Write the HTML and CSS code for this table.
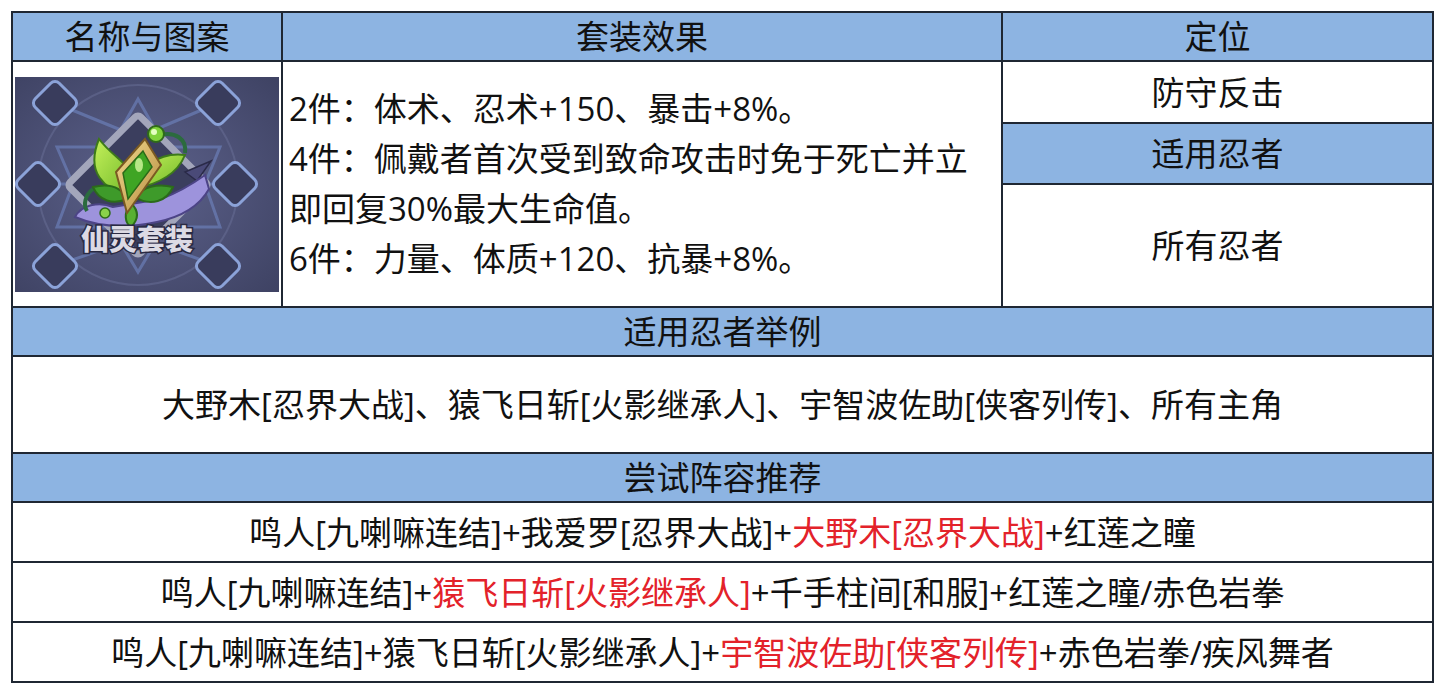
FILE: index.html
```html
<!DOCTYPE html>
<html lang="zh-CN">
<head>
<meta charset="utf-8">
<title>仙灵套装</title>
<link rel="stylesheet" href="styles.css">
</head>
<body>
<div class="sheet">
  <div class="cell head">名称与图案</div>
  <div class="cell head">套装效果</div>
  <div class="cell head">定位</div>

  <div class="cell pic">
    <svg class="emblem" viewBox="0 0 264 215" width="264" height="215">
      <defs>
        <radialGradient id="bg" cx="48%" cy="50%" r="70%">
          <stop offset="0" stop-color="#5d628c"/>
          <stop offset="1" stop-color="#3f4364"/>
        </radialGradient>
        <linearGradient id="leafG" x1="0" y1="0" x2="1" y2="1">
          <stop offset="0" stop-color="#c4f05a"/>
          <stop offset="1" stop-color="#6fb828"/>
        </linearGradient>
        <linearGradient id="gold" x1="0" y1="0" x2="1" y2="1">
          <stop offset="0" stop-color="#f3dc92"/>
          <stop offset="1" stop-color="#b48a3c"/>
        </linearGradient>
      </defs>
      <rect width="264" height="215" fill="url(#bg)"/>
      <circle cx="123" cy="108" r="100" fill="none" stroke="#6a6f98" stroke-width="2" opacity=".5"/>
      <path d="M40 26 L123 60 L203 26 M23 107 L60 107 M220 107 L186 107 M40 189 L123 160 L203 189" fill="none" stroke="#6b7fb8" stroke-width="3" opacity=".7"/>
      <path d="M123 22 L150 70 L205 70 L190 107 L205 150 L150 150 L123 195 L96 150 L42 150 L58 107 L42 70 L96 70 Z" fill="none" stroke="#6f86c2" stroke-width="3" opacity=".6"/>
      <g fill="#393c5c" stroke="#8ba2d8" stroke-width="3">
        <rect x="-17" y="-17" width="34" height="34" rx="6" transform="translate(40 26) rotate(45)"/>
        <rect x="-17" y="-17" width="34" height="34" rx="6" transform="translate(203 26) rotate(45)"/>
        <rect x="-17" y="-17" width="34" height="34" rx="6" transform="translate(23 107) rotate(45)"/>
        <rect x="-17" y="-17" width="34" height="34" rx="6" transform="translate(220 107) rotate(45)"/>
        <rect x="-17" y="-17" width="34" height="34" rx="6" transform="translate(40 189) rotate(45)"/>
        <rect x="-17" y="-17" width="34" height="34" rx="6" transform="translate(203 189) rotate(45)"/>
      </g>
      <rect x="-50" y="-50" width="100" height="100" rx="4" transform="translate(123 108) rotate(45)" fill="#3b3e5e" stroke="#a3a6bb" stroke-width="7"/>
      <path d="M170 95 L196 84 L182 104 Z" fill="#4a4a78" stroke="#2a2a48" stroke-width="1.5"/>
      <path d="M60 140 C66 128 84 124 98 130 L146 122 C162 116 176 108 190 98 L194 112 C184 130 166 140 142 145 C118 150 88 152 60 140 Z" fill="#9d93dc" stroke="#4c4486" stroke-width="2"/>
      <path d="M78 112 C70 118 68 128 72 134" fill="none" stroke="#2b6b3e" stroke-width="4"/>
      <path d="M145 58 C160 54 172 62 170 76" fill="none" stroke="#2b6b3e" stroke-width="4"/>
      <path d="M112 118 C90 112 70 96 84 62 C96 78 110 84 120 100 Z" fill="url(#leafG)" stroke="#3d7a1a" stroke-width="2"/>
      <path d="M118 112 C140 108 162 98 170 78 C156 76 140 80 130 92 Z" fill="url(#leafG)" stroke="#3d7a1a" stroke-width="2"/>
      <path d="M112 122 C98 128 84 124 78 110 C94 106 106 110 112 122 Z" fill="#3e9a2a" stroke="#2b6b1a" stroke-width="2"/>
      <path d="M120 120 C136 130 152 124 158 110 C142 106 128 110 120 120 Z" fill="#3e9a2a" stroke="#2b6b1a" stroke-width="2"/>
      <path d="M116 126 C108 136 110 146 116 150 C124 142 124 134 116 126 Z" fill="#58b032" stroke="#2b6b1a" stroke-width="2"/>
      <polygon points="130,62 146,88 112,136 101,95" fill="url(#gold)" stroke="#7a5a22" stroke-width="2"/>
      <polygon points="128,74 137,90 113,122 108,96" fill="#3fa524" stroke="#2a6a18" stroke-width="1.5"/>
      <ellipse cx="124" cy="88" rx="4" ry="7" fill="#d4f7a0" opacity=".8"/>
      <circle cx="141" cy="57" r="8" fill="#7fd23a" stroke="#2f6a1a" stroke-width="2"/>
      <circle cx="139" cy="55" r="3" fill="#e4ffc0"/>
      <circle cx="90" cy="136" r="5" fill="#8ad24a" stroke="#2f6a1a" stroke-width="1.5"/>
      <text class="emblem-name" x="122" y="173" text-anchor="middle">仙灵套装</text>
    </svg>
  </div>
  <div class="cell effects">
    <div class="line">2件：体术、忍术+150、暴击+8%。</div>
    <div class="line">4件：佩戴者首次受到致命攻击时免于死亡并立</div>
    <div class="line">即回复30%最大生命值。</div>
    <div class="line">6件：力量、体质+120、抗暴+8%。</div>
  </div>
  <div class="cell">防守反击</div>
  <div class="cell head">适用忍者</div>
  <div class="cell">所有忍者</div>

  <div class="cell head full">适用忍者举例</div>
  <div class="cell full">大野木[忍界大战]、猿飞日斩[火影继承人]、宇智波佐助[侠客列传]、所有主角</div>

  <div class="cell head full">尝试阵容推荐</div>
  <div class="cell full">鸣人[九喇嘛连结]+我爱罗[忍界大战]+<span class="hl">大野木[忍界大战]</span>+红莲之瞳</div>
  <div class="cell full">鸣人[九喇嘛连结]+<span class="hl">猿飞日斩[火影继承人]</span>+千手柱间[和服]+红莲之瞳/赤色岩拳</div>
  <div class="cell full">鸣人[九喇嘛连结]+猿飞日斩[火影继承人]+<span class="hl">宇智波佐助[侠客列传]</span>+赤色岩拳/疾风舞者</div>
</div>
</body>
</html>
```

FILE: styles.css
```css
html, body {
  margin: 0;
  padding: 0;
  background: #ffffff;
}

body {
  font-family: "Open Sans", "Noto Sans CJK SC", sans-serif;
  color: #111111;
}

.sheet {
  display: grid;
  grid-template-columns: 268px 718px 429px;
  grid-template-rows: 47px 60px 59px 121px 47px 95px 47px 58px 58px 58px;
  gap: 2px;
  padding: 2px;
  margin: 11px 0 0 11px;
  width: max-content;
  background: #1f2733;
}

.cell {
  background: #ffffff;
  display: flex;
  align-items: center;
  justify-content: center;
  font-size: 33px;
  line-height: 1;
  white-space: nowrap;
}

.head {
  background: #8db4e2;
}

.full {
  grid-column: 1 / -1;
}

.pic {
  grid-row: 2 / span 3;
}

.emblem {
  display: block;
}

.emblem-name {
  font-family: "Noto Sans CJK SC", sans-serif;
  font-size: 28px;
  font-weight: 900;
  fill: #dcdae4;
  stroke: #2a2a42;
  stroke-width: 3px;
  paint-order: stroke;
}

.effects {
  grid-row: 2 / span 3;
  flex-direction: column;
  align-items: flex-start;
  padding-left: 6px;
}

.line {
  line-height: 50px;
}

.hl {
  color: #e3222a;
}
```
